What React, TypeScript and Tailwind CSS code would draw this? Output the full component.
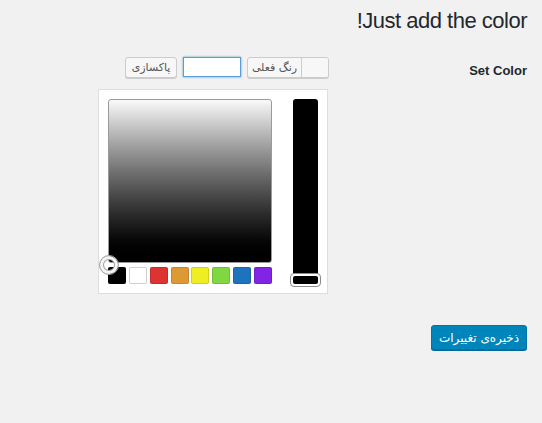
import React from "react";

const swatches = ["#000000", "#ffffff", "#dd3333", "#dd9933", "#eeee22", "#81d742", "#1e73be", "#8224e3"];

export default function App() {
  return (
    <div
      className="w-[542px] h-[423px] bg-[#f1f1f1] overflow-hidden text-[#23282d]"
      style={{ fontFamily: '"Liberation Sans", Arial, sans-serif' }}
    >
      <h1 dir="rtl" className="pt-[6px] pr-[15px] text-[22px] leading-[29px] font-normal text-right tracking-[-0.5px]">
        Just add the color!
      </h1>

      <div className="mt-[22px] flex justify-end pr-[15px]">
        <div className="flex flex-col items-end">
          <div className="flex gap-[6px] h-[21px]">
            <button
              className="h-[21px] w-[52px] rounded-[3px] border border-[#cccccc] bg-[#f7f7f7] shadow-[0_1px_0_#cccccc] text-[11px] leading-[19px] text-[#555555]"
              style={{ fontFamily: '"DejaVu Sans", sans-serif' }}
            >
              پاکسازی
            </button>
            <div className="h-[20px] w-[58px] border border-[#5b9dd9] bg-white shadow-[0_0_2px_rgba(30,140,190,0.8)]" />
            <div className="flex h-[21px] w-[82px] rounded-[3px] border border-[#cccccc] bg-[#f7f7f7] shadow-[0_1px_0_#cccccc] overflow-hidden">
              <div
                dir="rtl"
                className="w-[53px] text-center text-[11px] leading-[19px] text-[#555555]"
                style={{ fontFamily: '"DejaVu Sans", sans-serif' }}
              >
                رنگ فعلی
              </div>
              <div className="flex-1 border-l border-[#cccccc] bg-[#f7f7f7]" />
            </div>
          </div>

          <div className="mt-[11px] mr-[1px] flex border border-[#dedede] bg-white p-[9px]">
            <div className="flex flex-col w-[164px]">
              <div className="relative h-[164px] w-[164px] rounded-[3px] border border-[#9a9a9a] bg-gradient-to-b from-[#fafafa] to-[#000000]">
                <div className="absolute left-[-10px] top-[155px] h-[20px] w-[20px] rounded-full border border-[#a0a0a0] shadow-[inset_0_0_0_3px_#f4f4f4,inset_0_0_0_4px_#a0a0a0]" />
              </div>
              <div className="mt-[4px] flex justify-between">
                {swatches.map((c) => (
                  <div
                    key={c}
                    className="h-[17px] w-[18px] rounded-[2px] shadow-[inset_0_0_0_1px_rgba(0,0,0,0.12)]"
                    style={{ backgroundColor: c, boxShadow: c === "#ffffff" ? "inset 0 0 0 1px #d0d0d0" : undefined }}
                  />
                ))}
              </div>
            </div>
            <div className="relative ml-[21px] h-[185px] w-[25px] rounded-[3px] bg-black">
              <div className="absolute left-[-3px] top-[174px] h-[14px] w-[31px] rounded-[4px] border border-[#8c8c8c] bg-white p-[2px]">
                <div className="h-full w-full rounded-[2px] bg-black" />
              </div>
            </div>
          </div>
        </div>

        <div className="w-[198px] pt-[4px] text-right text-[13px] leading-[20px] font-bold">Set Color</div>
      </div>

      <div className="mt-[31px] flex justify-end pr-[15px]">
        <button
          className="h-[25px] w-[96px] rounded-[3px] border border-[#0073aa] bg-[#0085ba] shadow-[0_1px_0_#006799] text-[12px] leading-[22px] text-white"
          style={{ fontFamily: '"DejaVu Sans", sans-serif' }}
        >
          ذخیره‌ی تغییرات
        </button>
      </div>
    </div>
  );
}
